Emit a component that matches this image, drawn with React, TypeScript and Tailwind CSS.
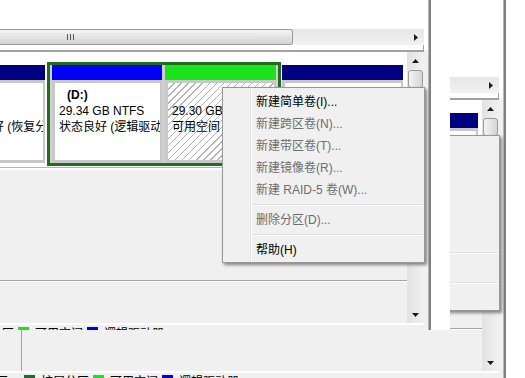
import React from "react";

const FONT = "font-['Liberation_Sans','Noto_Sans_CJK_SC',sans-serif]";

function ArrowRight() {
  return (
    <svg width="4" height="7" viewBox="0 0 4 7">
      <path d="M0 0L4 3.5L0 7Z" fill="#1a1a1a" />
    </svg>
  );
}
function ArrowUp() {
  return (
    <svg width="7" height="4" viewBox="0 0 7 4">
      <path d="M0 4L3.5 0L7 4Z" fill="#1a1a1a" />
    </svg>
  );
}
function ArrowDown() {
  return (
    <svg width="7" height="4" viewBox="0 0 7 4">
      <path d="M0 0L3.5 4L7 0Z" fill="#1a1a1a" />
    </svg>
  );
}

type PartProps = {
  width: string;
  header: string;
  hatched?: boolean;
  lines: { text: string; bold?: boolean }[];
};

function Partition({ width, header, hatched, lines }: PartProps) {
  return (
    <div className={`flex h-full shrink-0 flex-col bg-[#c8c8c8] ${width}`}>
      <div className={`h-[15px] shrink-0 ${header}`} />
      <div
        className={`mb-[3px] ml-[3px] mr-[2px] mt-[3px] flex-1 overflow-hidden whitespace-nowrap pl-[4px] pt-[4px] text-[12px] leading-[16px] text-black ${
          hatched
            ? "bg-white bg-[image:repeating-linear-gradient(135deg,#ffffff_0px,#ffffff_4px,#b4b4b4_4px,#b4b4b4_5px)]"
            : "bg-white"
        }`}
      >
        {lines.map((l, i) => (
          <div key={i} className={l.bold ? "h-[16px] pl-[8px] font-bold" : "h-[16px]"}>
            {l.text}
          </div>
        ))}
      </div>
    </div>
  );
}

function MenuItem({ text, enabled }: { text: string; enabled?: boolean }) {
  return (
    <div
      className={`h-[22px] whitespace-nowrap pl-[4px] text-[12px] leading-[22px] ${
        enabled ? "text-black" : "text-[#6d6d6d]"
      }`}
    >
      {text}
    </div>
  );
}

function MenuSep() {
  return (
    <div className="flex h-[8px] flex-col justify-center">
      <div className="h-[1px] bg-[#e0e0e0]" />
      <div className="h-[1px] bg-white" />
    </div>
  );
}

function LegendItem({ color, text }: { color: string; text: string }) {
  return (
    <div className="flex w-[69px] shrink-0 items-start">
      <div className={`mt-[1px] h-[9px] w-[11px] shrink-0 ${color}`} />
      <div className="ml-[6px] mt-[2px] whitespace-nowrap text-[12px] leading-[13px] text-black">{text}</div>
    </div>
  );
}

function Scene() {
  return (
    <div className="relative flex h-[460px] w-[620px] bg-white">
      {/* window content (main x -80 .. 424) */}
      <div className="flex w-[504px] shrink-0 flex-col">
        {/* list view */}
        <div className="h-[89px] shrink-0 bg-white" />
        {/* horizontal scrollbar */}
        <div className="flex h-[16px] shrink-0 bg-gradient-to-b from-[#e6e6e6] to-[#f2f2f2]">
          <div className="flex w-[373px] shrink-0 items-center justify-end rounded-r-[3px] border border-l-0 border-[#9a9a9a] bg-gradient-to-b from-[#f5f5f5] via-[#e4e4e4] to-[#d4d4d4]">
            <div className="mr-[218px] flex h-[6px] gap-[2px]">
              <div className="w-[1px] bg-[#555]" />
              <div className="w-[1px] bg-[#555]" />
              <div className="w-[1px] bg-[#555]" />
            </div>
          </div>
          <div className="flex-1" />
          <div className="flex w-[17px] shrink-0 items-center justify-center">
            <ArrowRight />
          </div>
        </div>
        <div className="h-[5px] shrink-0 border-r border-[#a0a0a0] bg-white" />
        <div className="h-[2px] shrink-0 bg-[#a2a2a2]" />
        {/* lower pane */}
        <div className="flex h-[271px] shrink-0">
          <div className="flex w-[487px] shrink-0 flex-col">
            <div className="flex h-[115px] shrink-0 items-start overflow-hidden bg-white pt-[10px]">
              <div className="w-[26px] shrink-0" />
              <div className="flex h-[104px] w-[101px] shrink-0 pb-[3px] pl-[3px] pr-[2px] pt-[3px]">
                <Partition
                  width="w-[96px]"
                  header="bg-[#000080]"
                  lines={[{ text: "\u00a0" }, { text: "\u00a0" }, { text: "状态良好 (恢复分区)" }]}
                />
              </div>
              <div className="flex h-[104px] w-[234px] shrink-0 gap-[3px] border-[3px] border-[#1e6e1e] bg-[#d0d0d0] px-[2px]">
                <Partition
                  width="w-[110px]"
                  header="bg-[#0000f8]"
                  lines={[
                    { text: "(D:)", bold: true },
                    { text: "29.34 GB NTFS" },
                    { text: "状态良好 (逻辑驱动器)" },
                  ]}
                />
                <Partition
                  width="w-[111px]"
                  header="bg-[#1be31b]"
                  hatched
                  lines={[{ text: "\u00a0" }, { text: "29.30 GB" }, { text: "可用空间" }]}
                />
              </div>
              <div className="flex h-[104px] w-[124px] shrink-0 pb-[3px] pl-[1px] pr-[2px] pt-[3px]">
                <Partition
                  width="w-[121px]"
                  header="bg-[#000080]"
                  lines={[
                    { text: "(E:)", bold: true },
                    { text: "29.30 GB NTFS" },
                    { text: "状态良好 (逻辑驱动器)" },
                  ]}
                />
              </div>
            </div>
            <div className="h-[1px] shrink-0 bg-[#b4b4b4]" />
            <div className="h-[2px] shrink-0 bg-white" />
            <div className="h-[110px] shrink-0 bg-[#f0f0f0]" />
            <div className="h-[1px] shrink-0 bg-[#a4a4a4]" />
            <div className="h-[1px] shrink-0 bg-white" />
            <div className="flex h-[41px] shrink-0 bg-[#f0f0f0]">
              <div className="w-[26px] shrink-0" />
              <div className="w-[1px] shrink-0 bg-[#a0a0a0]" />
            </div>
          </div>
          {/* vertical scrollbar */}
          <div className="flex w-[17px] shrink-0 flex-col bg-gradient-to-r from-[#e2e2e2] to-[#f1f1f1]">
            <div className="flex h-[18px] shrink-0 items-center justify-center">
              <ArrowUp />
            </div>
            <div className="mx-[1px] h-[18px] shrink-0 rounded-[3px] border border-[#9a9a9a] bg-gradient-to-r from-[#f5f5f5] via-[#e4e4e4] to-[#d6d6d6]" />
            <div className="flex-1" />
            <div className="flex h-[17px] shrink-0 items-center justify-center">
              <ArrowDown />
            </div>
          </div>
        </div>
        {/* legend */}
        <div className="h-[2px] shrink-0 bg-white" />
        <div className="flex-1 bg-[#f0f0f0] pt-[1px]">
          <div className="ml-[-109px] flex">
            <LegendItem color="bg-black" text="未分配" />
            <LegendItem color="bg-[#000080]" text="主分区" />
            <LegendItem color="bg-[#1e6e1e]" text="扩展分区" />
            <LegendItem color="bg-[#1be31b]" text="可用空间" />
            <LegendItem color="bg-[#0000e8]" text="逻辑驱动器" />
          </div>
        </div>
      </div>
      {/* window frame */}
      <div className="flex w-[4px] shrink-0 flex-col">
        <div className="h-[110px] bg-white" />
        <div className="flex-1 bg-[#f0f0f0]" />
      </div>
      <div className="w-[1px] shrink-0 bg-[#b8b8b8]" />
      <div className="w-[2px] shrink-0 bg-[#808080]" />
      <div className="flex-1 bg-white" />

      {/* context menu */}
      <div className="absolute left-[302px] top-[147px] flex w-[203px] border border-[#979797] bg-[#f0f0f0] shadow-[2px_2px_3px_rgba(0,0,0,0.45)]">
        <div className="w-[27px] shrink-0" />
        <div className="w-[1px] shrink-0 bg-[#e2e3e3]" />
        <div className="w-[1px] shrink-0 bg-white" />
        <div className="flex flex-1 flex-col pb-[1px] pr-[1px] pt-[3px]">
          <MenuItem text="新建简单卷(I)..." enabled />
          <MenuItem text="新建跨区卷(N)..." />
          <MenuItem text="新建带区卷(T)..." />
          <MenuItem text="新建镜像卷(R)..." />
          <MenuItem text="新建 RAID-5 卷(W)..." />
          <MenuSep />
          <MenuItem text="删除分区(D)..." />
          <MenuSep />
          <MenuItem text="帮助(H)" enabled />
        </div>
      </div>
    </div>
  );
}

export default function App() {
  return (
    <div className={`relative h-[378px] w-[525px] overflow-hidden bg-white ${FONT}`}>
      {/* echo of the window, drawn behind */}
      <div className="absolute left-[-5px] top-[-12px]">
        <Scene />
      </div>
      <div className="absolute left-[431px] top-0 h-[330px] w-[19px] bg-white" />
      {/* front window */}
      <div className="absolute left-0 top-0 h-[330px] w-[431px] overflow-hidden">
        <div className="absolute left-[-80px] top-[-60px]">
          <Scene />
        </div>
      </div>
    </div>
  );
}
